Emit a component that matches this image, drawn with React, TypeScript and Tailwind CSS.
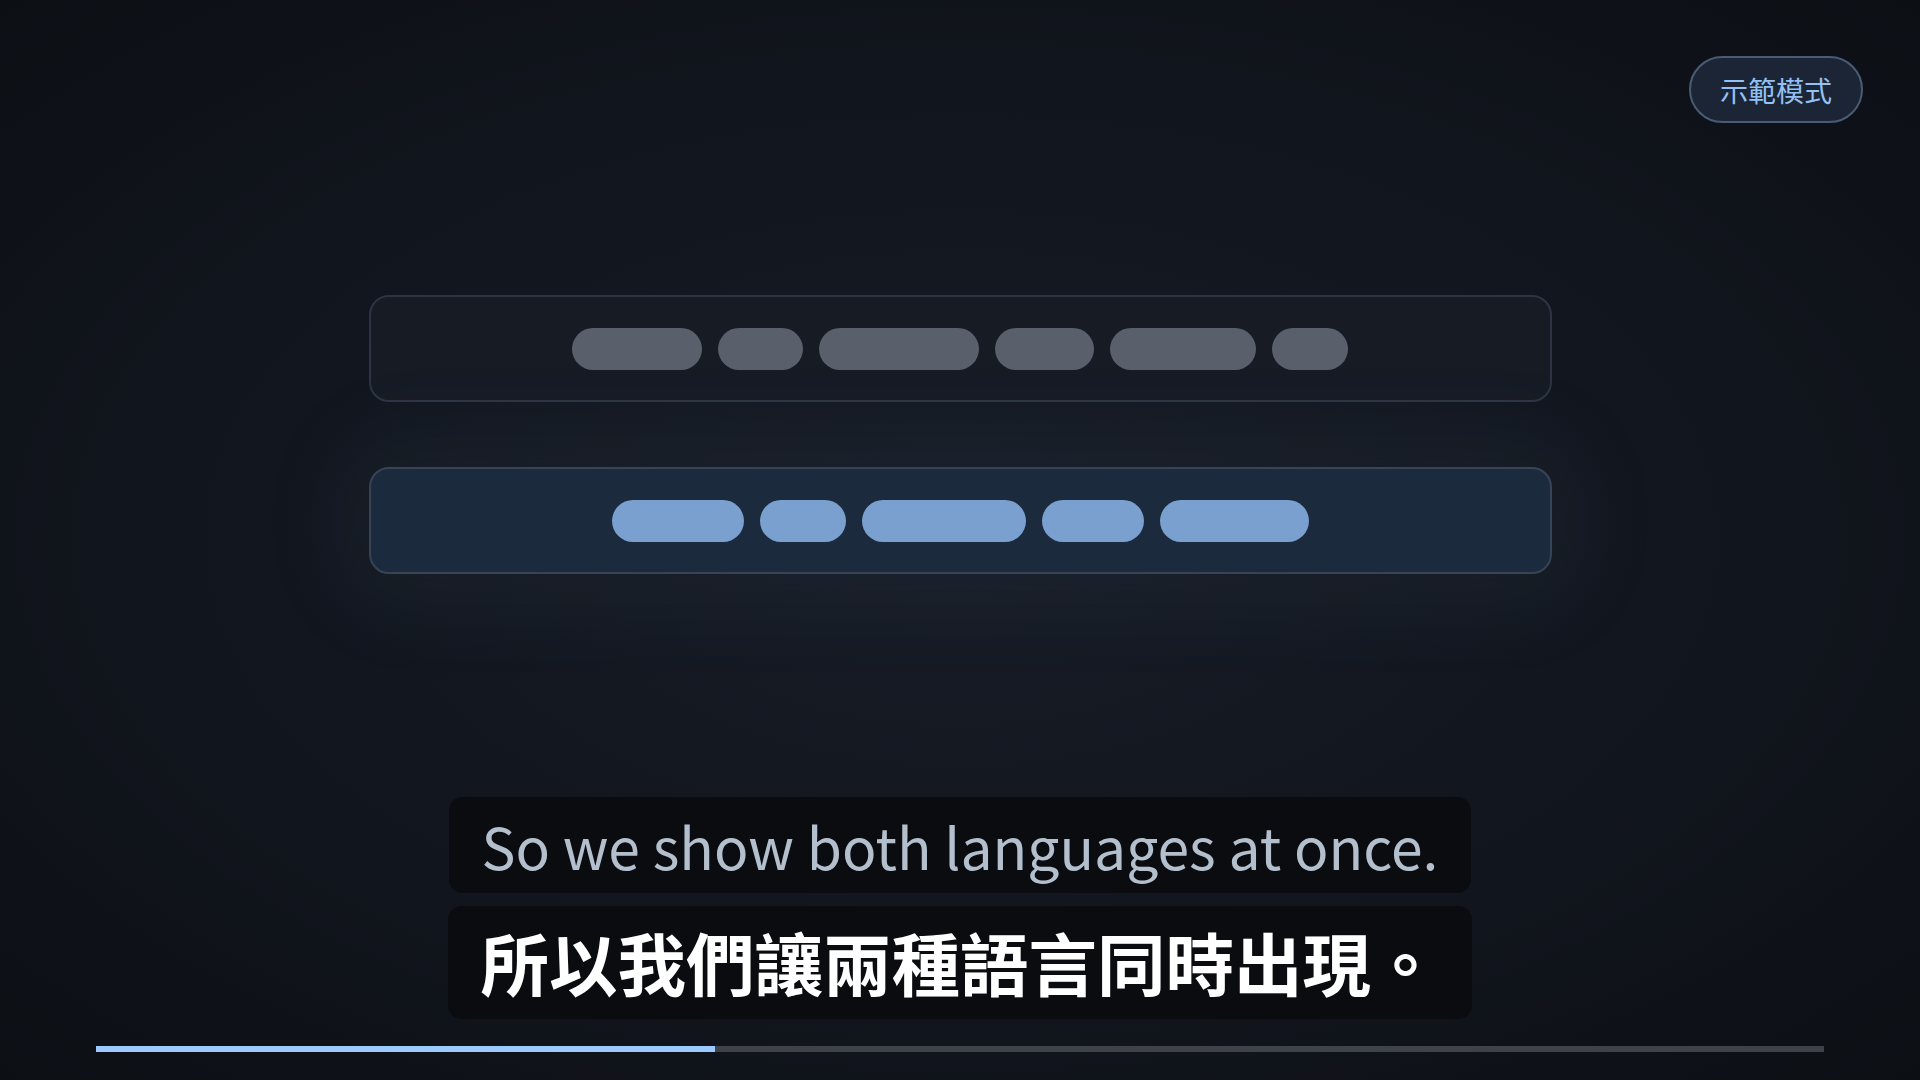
const sourcePills = [130, 85, 160, 99, 146, 76];
const targetPills = [132, 86, 164, 102, 149];

const progress = 35.8;

export default function App() {
  return (
    <div
      className="relative flex h-screen w-full flex-col items-center overflow-hidden bg-[radial-gradient(ellipse_at_center,#171c26_0%,#11151d_60%,#0c0f14_100%)]"
      style={{ fontFamily: '"Noto Sans CJK TC", "Noto Sans", sans-serif' }}
    >
      <button className="absolute top-14 right-[57px] flex h-[67px] items-center rounded-full border-2 border-[#4a5b76] bg-[#1b2536] px-[29px] text-[28px] text-[#93c1f3]">
        示範模式
      </button>

      {/* transcript lines */}
      <div className="mt-[295px] flex w-[1183px] flex-col gap-[65px]">
        <div className="flex h-[107px] items-center justify-center gap-4 rounded-[20px] border-2 border-[#2e3542] bg-[#161b24]">
          {sourcePills.map((w, i) => (
            <span key={i} className="h-[42px] rounded-full bg-[#5a606b]" style={{ width: w }} />
          ))}
        </div>
        <div className="flex h-[107px] items-center justify-center gap-4 rounded-[20px] border-2 border-[#384356] bg-[#1c2a3e] shadow-[0_0_90px_30px_rgba(120,140,170,0.07)]">
          {targetPills.map((w, i) => (
            <span key={i} className="h-[42px] rounded-full bg-[#7aa0cf]" style={{ width: w }} />
          ))}
        </div>
      </div>

      {/* subtitles */}
      <div className="mt-auto flex flex-col items-center gap-[13px]">
        <div className="flex h-[96px] items-center rounded-[14px] bg-[#0a0c10] px-[33px] text-[57px] leading-none text-[#b3bfcd]">
          So we show both languages at once.
        </div>
        <div className="flex h-[113px] items-center rounded-[14px] bg-[#0a0c10] px-8 text-[68.5px] font-bold leading-none text-white">
          所以我們讓兩種語言同時出現。
        </div>
      </div>

      <div className="mt-[27px] mb-[28px] h-[6px] w-[1728px] bg-[#3e4249]">
        <div className="h-full bg-[#9ccaff]" style={{ width: `${progress}%` }} />
      </div>
    </div>
  );
}
